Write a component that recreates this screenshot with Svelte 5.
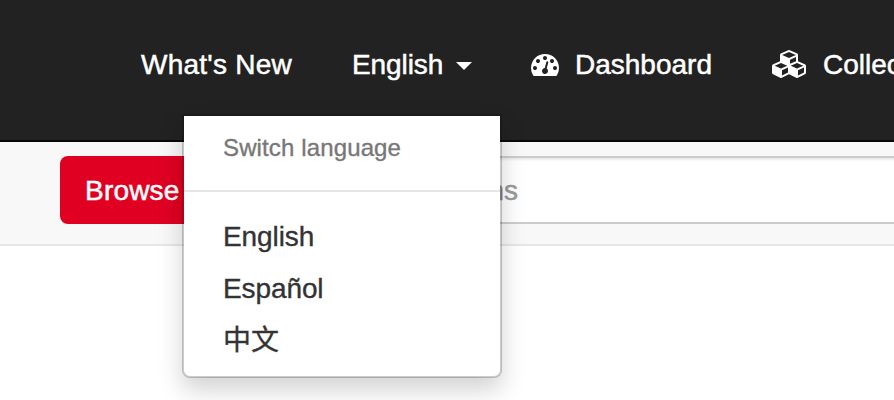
<script>
  const languages = ['English', 'Español', '中文'];
</script>

<div class="page">
  <nav class="navbar">
    <a class="item new" href="#new"><span class="label">What's New</span></a>
    <div class="item lang">
      <span class="label">English</span><span class="caret"></span>
      <div class="menu">
        <div class="header">Switch language</div>
        <div class="divider"></div>
        <ul>
          {#each languages as language}
            <li>{language}</li>
          {/each}
        </ul>
      </div>
    </div>
    <a class="item dash" href="#dashboard">
      <svg width="28" height="28" viewBox="0 0 1792 1792" fill="currentColor"><path d="M384 1152q0-53-37.5-90.5t-90.5-37.5-90.5 37.5-37.5 90.5 37.5 90.5 90.5 37.5 90.5-37.5 37.5-90.5zm192-448q0-53-37.5-90.5t-90.5-37.5-90.5 37.5-37.5 90.5 37.5 90.5 90.5 37.5 90.5-37.5 37.5-90.5zm428 481l101-382q6-26-7.5-48.5t-38.5-29.5-48 6.5-30 39.5l-101 382q-60 5-107 43.5t-63 98.5q-20 77 20 146t117 89 146-20 89-117q16-60-6-117t-72-91zm660-33q0-53-37.5-90.5t-90.5-37.5-90.5 37.5-37.5 90.5 37.5 90.5 90.5 37.5 90.5-37.5 37.5-90.5zm-640-640q0-53-37.5-90.5t-90.5-37.5-90.5 37.5-37.5 90.5 37.5 90.5 90.5 37.5 90.5-37.5 37.5-90.5zm448 192q0-53-37.5-90.5t-90.5-37.5-90.5 37.5-37.5 90.5 37.5 90.5 90.5 37.5 90.5-37.5 37.5-90.5zm320 448q0 261-141 483-19 29-54 29h-1402q-35 0-54-29-141-221-141-483 0-182 71-348t191-286 286-191 348-71 348 71 286 191 191 286 71 348z" /></svg>
      <span class="label">Dashboard</span>
    </a>
    <a class="item coll" href="#collections">
      <svg width="36" height="28" viewBox="0 0 2304 1792" fill="currentColor"><path d="M640 1632l384-192v-314l-384 164v342zm-64-454l404-173-404-173-404 173zm1088 454l384-192v-314l-384 164v342zm-64-454l404-173-404-173-404 173zm-448-293l384-165v-266l-384 164v267zm-64-379l441-189-441-189-441 189zm1088 518v416q0 36-19 67t-52 47l-448 224q-25 14-57 14t-57-14l-448-224q-4-2-7-4-2 2-7 4l-448 224q-25 14-57 14t-57-14l-448-224q-33-16-52-47t-19-67v-416q0-38 21.5-70t56.5-48l434-186v-400q0-38 21.5-70t56.5-48l448-192q23-10 50-10t50 10l448 192q35 16 56.5 48t21.5 70v400l434 186q36 16 57 48t21 70z" /></svg>
      <span class="label">Collections</span>
    </a>
  </nav>
  <div class="searchbar">
    <button class="browse"><span>Browse</span></button>
    <div class="field"><span>Collections</span></div>
  </div>
</div>

<style>
  .page {
    width: 894px;
    height: 400px;
    overflow: hidden;
    background: #fff;
    font-family: "Liberation Sans", Arial, "Noto Sans CJK SC", sans-serif;
    font-size: 28px;
    line-height: 40px;
    color: #333;
  }
  .navbar {
    box-sizing: border-box;
    display: flex;
    height: 142px;
    padding: 44px 0 0 141px;
    background: #222;
    border-bottom: 2px solid #080808;
    color: #fff;
    -webkit-text-stroke: 0.5px currentColor;
  }
  .item {
    display: flex;
    align-items: center;
    flex: none;
    height: 40px;
    color: #fff;
    text-decoration: none;
    white-space: nowrap;
  }
  .item > .label { padding-top: 2px; }
  .new { width: 211px; letter-spacing: 0.25px; }
  .lang { position: relative; width: 179px; }
  .lang > .label { letter-spacing: -0.1px; }
  .dash { width: 241px; }
  .dash .label { margin-left: 16px; }
  .coll .label { margin-left: 15px; }
  svg { display: block; flex: none; }
  .caret {
    margin: 3px 0 0 13px;
    border: 8px solid transparent;
    border-top-color: #fff;
    border-bottom: 0;
  }
  .menu {
    position: absolute;
    z-index: 2;
    top: 70px;
    left: -170px;
    box-sizing: border-box;
    width: 320px;
    height: 264px;
    padding: 10px 0;
    border: 2px solid rgba(0, 0, 0, 0.2);
    border-radius: 0 0 8px 8px;
    background: #fff;
    background-clip: padding-box;
    box-shadow: 0 12px 24px rgba(0, 0, 0, 0.175);
    color: #333;
    -webkit-text-stroke: 0.35px currentColor;
  }
  .header {
    padding: 4px 39px 0;
    font-size: 24px;
    line-height: 36px;
    letter-spacing: 0.13px;
    color: #777;
  }
  .divider {
    height: 2px;
    margin: 24px 0 19px;
    background: #e5e5e5;
  }
  ul { margin: 0; padding: 0; list-style: none; }
  li {
    height: 52px;
    padding: 0 39px;
    line-height: 52px;
    letter-spacing: -0.1px;
  }
  .searchbar {
    box-sizing: border-box;
    display: flex;
    height: 104px;
    padding: 14px 0 0 60px;
    background: #f8f8f8;
    border-bottom: 2px solid #e7e7e7;
  }
  .browse {
    flex: none;
    width: 160px;
    height: 68px;
    padding: 1px 0 0 25px;
    border: 0;
    border-radius: 8px 0 0 8px;
    background: #e00122;
    color: #fff;
    font: inherit;
    letter-spacing: 0.2px;
    text-align: left;
    -webkit-text-stroke: 0.5px currentColor;
  }
  .field {
    box-sizing: border-box;
    flex: none;
    display: flex;
    justify-content: flex-end;
    width: 700px;
    height: 68px;
    padding: 13px 400px 0 0;
    border: 2px solid #ccc;
    background: #fff;
    box-shadow: inset 0 2px 2px rgba(0, 0, 0, 0.075);
    color: #999;
    -webkit-text-stroke: 0.5px currentColor;
  }
</style>
